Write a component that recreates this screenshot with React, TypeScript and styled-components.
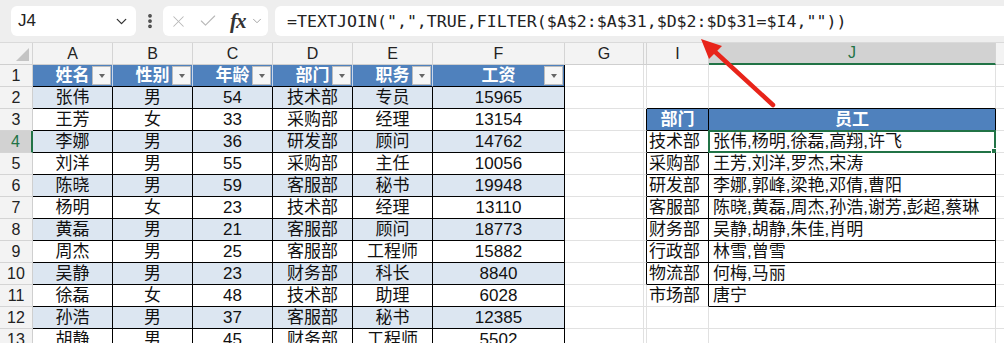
import React from "react";
import styled, { createGlobalStyle } from "styled-components";
import { ChevronDown, X, Check, EllipsisVertical } from "lucide-react";

const GlobalStyle = createGlobalStyle`
  body {
    margin: 0;
    background: #ffffff;
    overflow: hidden;
    font-family: "Liberation Sans", "Noto Sans CJK SC", sans-serif;
  }
`;

const GREEN = "#217346";
const BLUE = "#4f81bd";
const BAND = "#dce6f1";
const GRID = "#e1e1e1";

const Page = styled.div`
  position: relative;
  width: 1004px;
  height: 343px;
  overflow: hidden;
`;

const Toolbar = styled.div`
  height: 43px;
  box-sizing: border-box;
  background: #eeeeee;
  border-bottom: 1px solid #dadada;
  display: flex;
  align-items: flex-start;
  padding: 6px 0 0 11px;
`;

const NameBox = styled.div`
  width: 125px;
  height: 30px;
  box-sizing: border-box;
  background: #fff;
  border-radius: 6px;
  display: flex;
  align-items: center;
  justify-content: space-between;
  padding: 0 6px 0 7px;
  font-size: 17px;
  color: #222;
`;

const Dots = styled.div`
  width: 27px;
  height: 30px;
  display: flex;
  align-items: center;
  justify-content: center;
  color: #444;
`;

const FxBox = styled.div`
  width: 105px;
  height: 30px;
  box-sizing: border-box;
  background: #fff;
  border-radius: 6px;
  display: flex;
  align-items: center;
  padding: 0 4px 0 6px;
  gap: 10px;
  color: #b8b8b8;
`;

const FxLabel = styled.span`
  font-family: "Liberation Serif", serif;
  font-style: italic;
  font-weight: bold;
  font-size: 21px;
  color: #333;
  margin-left: 2px;
  margin-right: -6px;
  letter-spacing: -1px;
`;

const FormulaBox = styled.div`
  margin-left: 7px;
  flex: 1;
  height: 30px;
  box-sizing: border-box;
  background: #fff;
  border-radius: 6px 0 0 6px;
  display: flex;
  align-items: center;
  padding-left: 12px;
  font-family: "DejaVu Sans Mono", "Liberation Mono", monospace;
  font-size: 16.6px;
  color: #222;
  white-space: pre;
`;

const Row = styled.div`
  display: flex;
  height: 22px;
`;

const HeadCell = styled.div<{ $w: number; $active?: boolean }>`
  width: ${(p) => p.$w}px;
  flex: none;
  box-sizing: border-box;
  height: 22px;
  background: ${(p) => (p.$active ? "#d2d2d2" : "#f3f3f3")};
  border-right: 1px solid #d4d4d4;
  border-bottom: ${(p) => (p.$active ? `2px solid ${GREEN}` : "1px solid #cfcfcf")};
  color: ${(p) => (p.$active ? GREEN : "#222")};
  font-size: 16px;
  display: flex;
  align-items: center;
  justify-content: center;
`;

const Corner = styled(HeadCell)`
  position: relative;
  &::after {
    content: "";
    position: absolute;
    right: 3px;
    bottom: 3px;
    border-style: solid;
    border-width: 0 0 13px 13px;
    border-color: transparent transparent #c4c4c4 transparent;
  }
`;

const RowNum = styled.div<{ $active?: boolean }>`
  width: 33px;
  flex: none;
  box-sizing: border-box;
  height: 22px;
  background: ${(p) => (p.$active ? "#d2d2d2" : "#f3f3f3")};
  border-right: ${(p) => (p.$active ? `2px solid ${GREEN}` : "1px solid #cfcfcf")};
  border-bottom: 1px solid #d4d4d4;
  color: ${(p) => (p.$active ? GREEN : "#222")};
  font-size: 16px;
  display: flex;
  align-items: center;
  justify-content: center;
`;

type Line = "grid" | "black" | "light";
const lineColor = (l: Line) => (l === "black" ? "#000" : l === "light" ? "#c9d6ea" : GRID);

const Cell = styled.div<{
  $w: number;
  $bg?: string;
  $right: Line;
  $bottom: Line;
  $head?: boolean;
  $left?: boolean;
  $selected?: boolean;
}>`
  position: relative;
  width: ${(p) => p.$w}px;
  flex: none;
  box-sizing: border-box;
  height: 22px;
  background: ${(p) => p.$bg ?? "#fff"};
  border-right: 1px solid ${(p) => lineColor(p.$right)};
  border-bottom: 1px solid ${(p) => lineColor(p.$bottom)};
  display: flex;
  align-items: center;
  justify-content: ${(p) => (p.$left ? "flex-start" : "center")};
  padding-left: ${(p) => (p.$left ? "2px" : "0")};
  font-size: 17px;
  line-height: 22px;
  white-space: nowrap;
  color: ${(p) => (p.$head ? "#fff" : "#111")};
  font-weight: ${(p) => (p.$head ? "bold" : "normal")};
  ${(p) =>
    p.$selected &&
    `
    &::before {
      content: "";
      position: absolute;
      left: -1px;
      top: -1px;
      right: -1px;
      bottom: -1px;
      border: 2px solid ${GREEN};
    }
    &::after {
      content: "";
      position: absolute;
      right: -4px;
      bottom: -4px;
      width: 6px;
      height: 6px;
      background: ${GREEN};
      border: 1px solid #fff;
    }
  `}
`;

const Names = styled.span`
  padding-left: 2px;
`;

const FilterButton = styled.span`
  position: absolute;
  right: 1px;
  top: 1px;
  width: 19px;
  height: 19px;
  box-sizing: border-box;
  background: #f6f6f6;
  border: 1px solid #bdbdbd;
  display: flex;
  align-items: center;
  justify-content: center;
  &::after {
    content: "";
    border-style: solid;
    border-width: 4px 3.5px 0 3.5px;
    border-color: #666 transparent transparent transparent;
  }
`;

const Arrow = styled.svg`
  position: absolute;
  left: 0;
  top: 0;
  pointer-events: none;
`;

const COLS = [
  { label: "A", w: 80 },
  { label: "B", w: 80 },
  { label: "C", w: 80 },
  { label: "D", w: 80 },
  { label: "E", w: 80 },
  { label: "F", w: 132 },
  { label: "G", w: 79 },
  { label: "", w: 3 },
  { label: "I", w: 62 },
  { label: "J", w: 287 },
  { label: "", w: 40 },
];

const tableHead = ["姓名", "性别", "年龄", "部门", "职务", "工资"];
const tableRows = [
  ["张伟", "男", "54", "技术部", "专员", "15965"],
  ["王芳", "女", "33", "采购部", "经理", "13154"],
  ["李娜", "男", "36", "研发部", "顾问", "14762"],
  ["刘洋", "男", "55", "采购部", "主任", "10056"],
  ["陈晓", "男", "59", "客服部", "秘书", "19948"],
  ["杨明", "女", "23", "技术部", "经理", "13110"],
  ["黄磊", "男", "21", "客服部", "顾问", "18773"],
  ["周杰", "男", "25", "客服部", "工程师", "15882"],
  ["吴静", "男", "23", "财务部", "科长", "8840"],
  ["徐磊", "女", "48", "技术部", "助理", "6028"],
  ["孙浩", "男", "37", "客服部", "秘书", "12385"],
  ["胡静", "男", "45", "财务部", "工程师", "5502"],
];

const summary = [
  ["技术部", "张伟,杨明,徐磊,高翔,许飞"],
  ["采购部", "王芳,刘洋,罗杰,宋涛"],
  ["研发部", "李娜,郭峰,梁艳,邓倩,曹阳"],
  ["客服部", "陈晓,黄磊,周杰,孙浩,谢芳,彭超,蔡琳"],
  ["财务部", "吴静,胡静,朱佳,肖明"],
  ["行政部", "林雪,曾雪"],
  ["物流部", "何梅,马丽"],
  ["市场部", "唐宁"],
];

const formula = `=TEXTJOIN(",",TRUE,FILTER($A$2:$A$31,$D$2:$D$31=$I4,""))`;

function SheetRow({ r }: { r: number }) {
  const cells: React.ReactNode[] = [];

  // left table A..F
  for (let c = 0; c < 6; c++) {
    const w = COLS[c].w;
    if (r === 1) {
      cells.push(
        <Cell key={c} $w={w} $bg={BLUE} $head $right={c === 5 ? "black" : "light"} $bottom="black">
          {tableHead[c]}
          <FilterButton />
        </Cell>
      );
    } else {
      cells.push(
        <Cell key={c} $w={w} $bg={r % 2 === 0 ? BAND : "#fff"} $right="black" $bottom="black">
          {tableRows[r - 2][c]}
        </Cell>
      );
    }
  }

  const inSummary = r >= 3 && r <= 11;
  // G and hidden H
  cells.push(<Cell key="g" $w={COLS[6].w} $right="grid" $bottom="grid" />);
  cells.push(
    <Cell key="h" $w={COLS[7].w} $right={r >= 3 && r <= 10 ? "black" : "grid"} $bottom="grid" />
  );

  // I and J
  if (r === 3) {
    cells.push(
      <Cell key="i" $w={COLS[8].w} $bg={BLUE} $head $right="black" $bottom="black">
        部门
      </Cell>,
      <Cell key="j" $w={COLS[9].w} $bg={BLUE} $head $right="black" $bottom="black">
        员工
      </Cell>
    );
  } else if (inSummary) {
    const [dept, names] = summary[r - 4];
    const last = r === 11;
    cells.push(
      <Cell key="i" $w={COLS[8].w} $left $right="black" $bottom={last ? "grid" : "black"}>
        {dept}
      </Cell>,
      <Cell key="j" $w={COLS[9].w} $left $right="black" $bottom="black" $selected={r === 4}>
        <Names>{names}</Names>
      </Cell>
    );
  } else {
    const above = r === 2;
    cells.push(
      <Cell key="i" $w={COLS[8].w} $right="grid" $bottom={above ? "black" : "grid"} />,
      <Cell key="j" $w={COLS[9].w} $right="grid" $bottom={above ? "black" : "grid"} />
    );
  }
  cells.push(<Cell key="k" $w={COLS[10].w} $right="grid" $bottom="grid" />);

  return (
    <Row>
      <RowNum $active={r === 4}>{r}</RowNum>
      {cells}
    </Row>
  );
}

export default function App() {
  const rows = Array.from({ length: 13 }, (_, i) => i + 1);
  return (
    <Page>
      <GlobalStyle />
      <Toolbar>
        <NameBox>
          J4
          <ChevronDown size={17} strokeWidth={1.8} color="#333" />
        </NameBox>
        <Dots>
          <EllipsisVertical size={18} strokeWidth={3} />
        </Dots>
        <FxBox>
          <X size={19} strokeWidth={1.3} />
          <Check size={20} strokeWidth={1.3} />
          <FxLabel>fx</FxLabel>
          <ChevronDown size={14} strokeWidth={1.5} color="#999" />
        </FxBox>
        <FormulaBox>{formula}</FormulaBox>
      </Toolbar>
      <Row>
        <Corner $w={33} />
        {COLS.map((c, i) => (
          <HeadCell key={i} $w={c.w} $active={c.label === "J"}>
            {c.label}
          </HeadCell>
        ))}
      </Row>
      {rows.map((r) => (
        <SheetRow key={r} r={r} />
      ))}
      <Arrow width={1004} height={343}>
        <line x1={773} y1={105} x2={712} y2={49} stroke="#e8241a" strokeWidth={4.5} strokeLinecap="round" />
        <polygon points="701,39 722,46 709,59" fill="#e8241a" />
      </Arrow>
    </Page>
  );
}
